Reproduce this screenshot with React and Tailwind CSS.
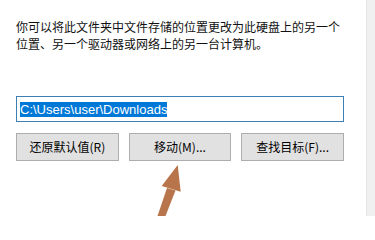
import React from 'react';

const font = { fontFamily: '"Noto Sans CJK SC", "Liberation Sans", sans-serif' };

function DialogButton({ children }) {
  return (
    <button className="h-[28px] border border-[#adadad] bg-[#e1e1e1] text-[12px] text-black leading-none">
      {children}
    </button>
  );
}

export default function App() {
  return (
    <div className="relative flex w-[375px] h-[216px] bg-white overflow-hidden" style={font}>
      <div className="flex-1 pl-4 pt-[18px]">
        <p className="text-[12px] leading-[17px] text-[#111] whitespace-nowrap">
          你可以将此文件夹中文件存储的位置更改为此硬盘上的另一个
          <br />
          位置、另一个驱动器或网络上的另一台计算机。
        </p>

        <div className="mt-[44px] w-[328px] h-[26px] border border-[#3b7fb5] flex items-center pl-[3px]">
          <span
            className="bg-[#0078d7] text-white text-[13px] leading-[15px] h-[15px] flex items-center"
            style={{ fontFamily: '"Liberation Sans", "Noto Sans", sans-serif' }}
          >
            C:\Users\user\Downloads
          </span>
        </div>

        <div className="mt-[11px] w-[328px] grid grid-cols-3 gap-[10px]">
          <DialogButton>还原默认值(R)</DialogButton>
          <DialogButton>移动(M)...</DialogButton>
          <DialogButton>查找目标(F)...</DialogButton>
        </div>
      </div>

      <div className="w-[9px] h-full bg-[#f0f0f0] border-l border-[#e6e6e6]" />

      <svg
        className="absolute left-0 top-0 pointer-events-none"
        width="375"
        height="216"
        viewBox="0 0 375 216"
      >
        <polygon points="177.7,165 161.7,186 180.7,191.7" fill="#b8744a" />
        <polygon points="167,188 175.5,190.5 165.5,216 157.5,216" fill="#b8744a" />
      </svg>
    </div>
  );
}
